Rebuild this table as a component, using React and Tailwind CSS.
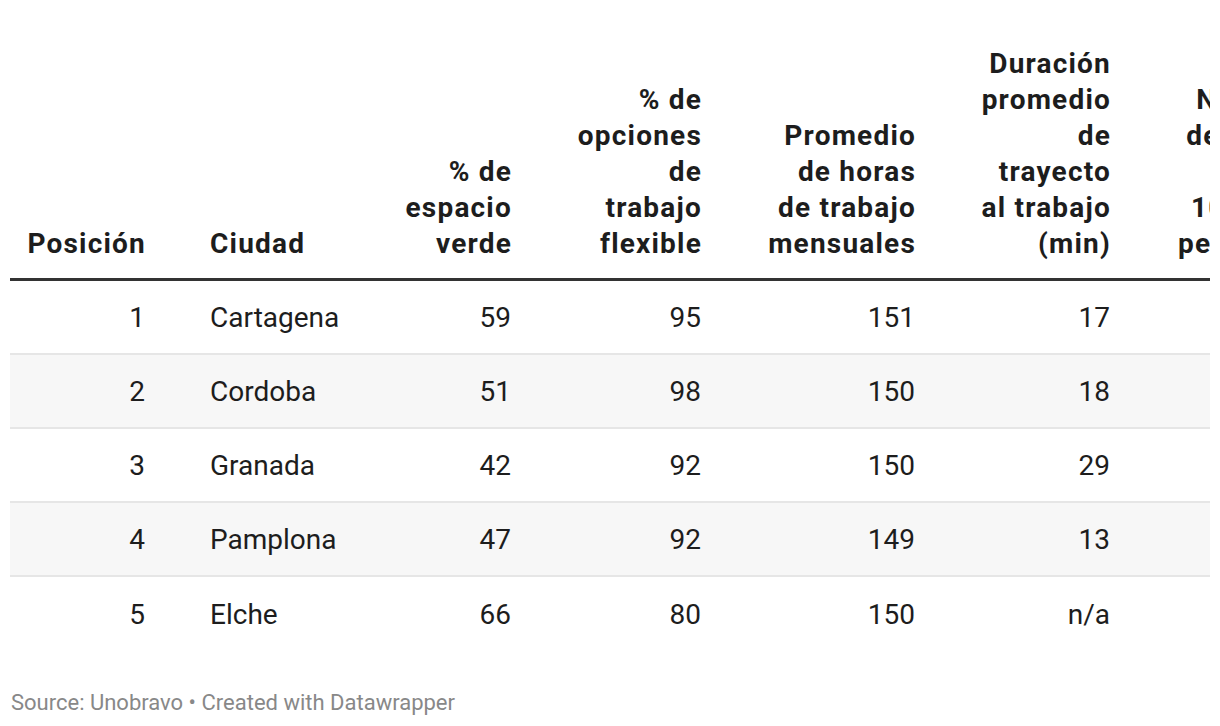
const columns = [
  { key: 'pos', label: ['Posición'], width: 'w-[145px]', align: 'text-right pr-[10px]', head: 'text-right pr-[9px]' },
  { key: 'city', label: ['Ciudad'], width: 'w-[200px]', align: 'text-left pl-[55px]', head: 'text-left pl-[55px]' },
  { key: 'green', label: ['% de', 'espacio', 'verde'], width: 'w-[166px]', align: 'text-right pr-[10px]', head: 'text-right pr-[9px]' },
  { key: 'flex', label: ['% de', 'opciones', 'de', 'trabajo', 'flexible'], width: 'w-[190px]', align: 'text-right pr-[10px]', head: 'text-right pr-[9px]' },
  { key: 'hours', label: ['Promedio', 'de horas', 'de trabajo', 'mensuales'], width: 'w-[214px]', align: 'text-right pr-[10px]', head: 'text-right pr-[9px]' },
  { key: 'commute', label: ['Duración', 'promedio', 'de', 'trayecto', 'al trabajo', '(min)'], width: 'w-[195px]', align: 'text-right pr-[10px]', head: 'text-right pr-[9px]' },
  { key: 'gyms', label: ['Número', 'de bares', 'por', '100.000', 'personas'], width: 'w-[193px]', align: 'text-right pr-[10px]', head: 'text-right pr-[9px]' },
];

const rows = [
  { pos: 1, city: 'Cartagena', green: 59, flex: 95, hours: 151, commute: 17, gyms: 42 },
  { pos: 2, city: 'Cordoba', green: 51, flex: 98, hours: 150, commute: 18, gyms: 38 },
  { pos: 3, city: 'Granada', green: 42, flex: 92, hours: 150, commute: 29, gyms: 51 },
  { pos: 4, city: 'Pamplona', green: 47, flex: 92, hours: 149, commute: 13, gyms: 44 },
  { pos: 5, city: 'Elche', green: 66, flex: 80, hours: 150, commute: 'n/a', gyms: 36 },
];

export default function App() {
  return (
    <div className="min-h-screen bg-white px-[10px] pt-[46px] font-['Roboto',sans-serif] text-[#1d1d1d]">
      <div className="overflow-hidden">
        <div className="w-max">
          {/* header, bottom aligned like datawrapper */}
          <div className="flex items-end border-b-[3px] border-[#333333] pb-[16px]">
            {columns.map((col) => (
              <div key={col.key} className={`${col.width} ${col.head} shrink-0 text-[28px] font-bold leading-[36px] tracking-[1.2px]`}>
                {col.label.map((line) => (
                  <div key={line}>{line}</div>
                ))}
              </div>
            ))}
          </div>

          {rows.map((row, index) => (
            <div
              key={row.pos}
              className={`flex h-[74px] items-center ${index % 2 === 1 ? 'bg-[#f7f7f7]' : 'bg-white'} ${index < rows.length - 1 ? 'border-b-2 border-[#e6e6e6]' : ''}`}
            >
              {columns.map((col) => (
                <div key={col.key} className={`${col.width} ${col.align} shrink-0 pt-[2px] text-[28px] leading-[36px]`}>
                  {row[col.key]}
                </div>
              ))}
            </div>
          ))}
        </div>
      </div>

      <p className="mt-[39px] pl-px text-[22px] leading-[26px] text-[#888888]">
        Source: Unobravo • Created with Datawrapper
      </p>
    </div>
  );
}
